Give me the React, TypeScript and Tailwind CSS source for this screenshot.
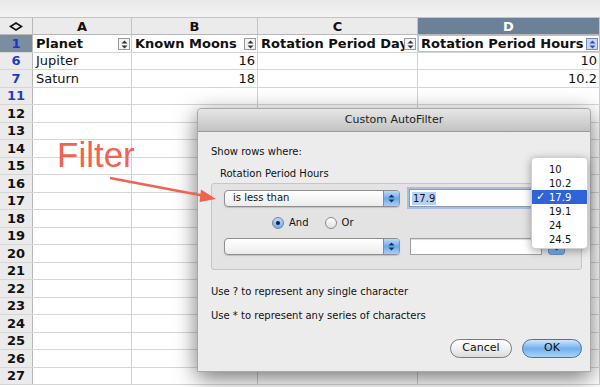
import React from 'react'

const cols = [
  { key: 'A', w: 'w-[99px]' },
  { key: 'B', w: 'w-[126px]' },
  { key: 'C', w: 'w-[160px]' },
  { key: 'D', w: 'flex-1' },
]

const rowNums = [1, 6, 7, 11, 12, 13, 14, 15, 16, 17, 18, 19, 20, 21, 22, 23, 24, 25, 26, 27]

const data: Record<number, string[]> = {
  1: ['Planet', 'Known Moons', 'Rotation Period Days', 'Rotation Period Hours'],
  6: ['Jupiter', '16', '', '10'],
  7: ['Saturn', '18', '', '10.2'],
}

const UpDown = ({ color = '#333' }: { color?: string }) => (
  <svg width="7" height="9" viewBox="0 0 7 9">
    <path d="M3.5 0.5 L6.5 3.5 L0.5 3.5 Z" fill={color} />
    <path d="M3.5 8.5 L6.5 5.5 L0.5 5.5 Z" fill={color} />
  </svg>
)

const FilterBtn = ({ active }: { active?: boolean }) => (
  <div
    className={`absolute right-[1px] top-[3px] w-[12px] h-[12px] flex items-center justify-center border ${
      active ? 'border-[#7a8fb0] bg-[#c8d6f0]' : 'border-[#9a9a9a] bg-[#f4f4f4]'
    }`}
  >
    <UpDown color={active ? '#2a4fc0' : '#333'} />
  </div>
)

const AquaSelect = ({ label }: { label: string }) => (
  <div className="w-[176px] h-[17px] flex items-center rounded-[4px] border border-[#8e8e8e] bg-gradient-to-b from-[#ffffff] to-[#ececec] shadow-[0_1px_1px_rgba(0,0,0,0.15)] overflow-hidden">
    <div className="flex-1 pl-[8px] text-[10px] leading-none text-[#111]">{label}</div>
    <div className="w-[16px] h-full flex items-center justify-center bg-gradient-to-b from-[#b9daf7] via-[#6aa9ec] to-[#a6d0f4] border-l border-[#6b8fc0]">
      <UpDown color="#1d2f55" />
    </div>
  </div>
)

const SmallBtn = () => (
  <div className="ml-[6px] w-[17px] h-[16px] rounded-[3px] border border-[#6b8fc0] bg-gradient-to-b from-[#b9daf7] to-[#6aa9ec] flex items-center justify-center">
    <UpDown color="#1d2f55" />
  </div>
)

export default function App() {
  return (
    <div className="relative w-[600px] h-[387px] overflow-hidden bg-white" style={{ fontFamily: '"DejaVu Sans", sans-serif' }}>
      {/* toolbar strip */}
      <div className="h-[18px] bg-gradient-to-b from-[#e9e9e9] to-[#f3f3f3] border-b border-[#c4c4c4]" />

      {/* column headers */}
      <div className="flex h-[17px] border-b border-[#b8b8b8] bg-[#ebebeb]">
        <div className="w-[33px] flex items-center justify-center border-r border-[#b8b8b8]">
          <svg width="14" height="9" viewBox="0 0 14 9">
            <path d="M1.5 4.5 L7 1 L12.5 4.5 L7 8 Z" fill="none" stroke="#111" strokeWidth="1.6" />
          </svg>
        </div>
        {cols.map((c) => (
          <div
            key={c.key}
            className={`${c.w} flex items-center justify-center border-r border-[#c4c4c4] font-bold text-[13px] leading-none ${
              c.key === 'D' ? 'bg-[#6c8198] text-white' : 'text-[#111]'
            }`}
          >
            {c.key}
          </div>
        ))}
      </div>

      {/* rows */}
      {rowNums.map((n) => {
        const vals = data[n] || ['', '', '', '']
        const header = n === 1
        const blue = n <= 11
        return (
          <div key={n} className="flex h-[17.5px] border-b border-[#d6d6d6]">
            <div
              className={`w-[33px] flex items-center justify-center border-r border-[#b8b8b8] font-bold text-[13px] leading-none ${
                header ? 'bg-[#7b8da0] text-[#1638c8]' : blue ? 'bg-[#ebebeb] text-[#1e3cc0]' : 'bg-[#ebebeb] text-[#111]'
              }`}
            >
              {n}
            </div>
            {cols.map((c, i) => (
              <div
                key={c.key}
                className={`${c.w} relative flex items-center overflow-hidden whitespace-nowrap border-r border-[#d0d0d0] text-[13px] leading-none text-[#111] ${
                  header ? 'font-bold px-[3px]' : i === 0 ? 'px-[3px]' : 'justify-end px-[2px]'
                } ${header && c.key === 'D' ? 'outline outline-1 -outline-offset-1 outline-[#a9c1ea]' : ''}`}
              >
                {vals[i]}
                {header && <FilterBtn active={c.key === 'D'} />}
              </div>
            ))}
          </div>
        )
      })}

      {/* dialog */}
      <div className="absolute left-[197px] top-[108px] w-[394px] h-[264px] bg-[#ececec] border border-[#a8a8a8] rounded-t-[4px] shadow-[0_6px_22px_rgba(0,0,0,0.55)] flex flex-col">
        <div className="h-[23px] shrink-0 flex items-center justify-center rounded-t-[4px] bg-gradient-to-b from-[#e6e6e6] to-[#c3c3c3] border-b border-[#9a9a9a] text-[11px] text-[#222]">
          Custom AutoFilter
        </div>
        <div className="pl-[13px] pr-[8px] pt-[15px] flex flex-col">
          <div className="text-[10px] leading-none text-[#111]">Show rows where:</div>
          <div className="ml-[9px] mt-[12px] text-[10px] leading-none text-[#111]">Rotation Period Hours</div>
          <div className="mt-[4px] h-[87px] rounded-[3px] border border-[#c6c6c6] bg-[#e3e3e3] pl-[12px] pt-[5px] flex flex-col">
            <div className="flex items-center">
              <AquaSelect label="is less than" />
              <div className="ml-[9px] w-[133px] h-[18px] flex items-center border border-[#8b9bb4] bg-white shadow-[0_0_0_2px_rgba(120,160,220,0.55)] pl-[2px]">
                <span className="bg-[#b5d2f4] text-[10px] leading-[13px] text-[#111] px-[1px]">17.9</span>
              </div>
              <SmallBtn />
            </div>
            <div className="flex items-center h-[17px] mt-[7px] ml-[48px] text-[10px] text-[#111]">
              <div className="w-[12px] h-[12px] rounded-full border border-[#6d86a8] bg-gradient-to-b from-[#bcd9f6] to-[#74aee8] flex items-center justify-center">
                <div className="w-[4px] h-[4px] rounded-full bg-[#102040]" />
              </div>
              <span className="ml-[5px]">And</span>
              <div className="ml-[16px] w-[12px] h-[12px] rounded-full border border-[#8a8a8a] bg-gradient-to-b from-[#ffffff] to-[#e0e0e0]" />
              <span className="ml-[5px]">Or</span>
            </div>
            <div className="flex items-center mt-[7px]">
              <AquaSelect label="" />
              <div className="ml-[10px] w-[132px] h-[17px] border border-[#a0a0a0] bg-white shadow-[inset_0_1px_1px_rgba(0,0,0,0.15)]" />
              <SmallBtn />
            </div>
          </div>
          <div className="mt-[17px] text-[10px] leading-none text-[#111]">Use ? to represent any single character</div>
          <div className="mt-[14px] text-[10px] leading-none text-[#111]">Use * to represent any series of characters</div>
          <div className="mt-[18px] flex justify-end gap-[10px]">
            <div className="w-[62px] h-[19px] rounded-full border border-[#7a7a7a] bg-gradient-to-b from-[#ffffff] via-[#f0f0f0] to-[#dcdcdc] flex items-center justify-center text-[11px] text-[#111]">
              Cancel
            </div>
            <div className="w-[60px] h-[19px] rounded-full border border-[#4a72a8] bg-gradient-to-b from-[#cfe6fb] via-[#72b0ee] to-[#a8d4f8] flex items-center justify-center text-[11px] text-[#111]">
              OK
            </div>
          </div>
        </div>
      </div>

      {/* popup list */}
      <div className="absolute left-[531px] top-[157px] w-[57px] h-[92px] rounded-[4px] bg-white shadow-[0_2px_8px_rgba(0,0,0,0.35)] border border-[#d0d0d0] pt-[4px] text-[10px] text-[#111]">
        {['10', '10.2', '17.9', '19.1', '24', '24.5'].map((v) => (
          <div
            key={v}
            className={`h-[14px] flex items-center ${v === '17.9' ? 'bg-[#2f63d9] text-white' : ''}`}
          >
            <span className="w-[17px] text-center text-[11px]">{v === '17.9' ? '✓' : ''}</span>
            <span>{v}</span>
          </div>
        ))}
      </div>

      {/* annotation */}
      <div className="absolute left-[57px] top-[137px] text-[35px] leading-none text-[#ef6350]" style={{ fontFamily: '"Liberation Sans", sans-serif' }}>
        Filter
      </div>
      <svg className="absolute left-0 top-0 pointer-events-none" width="600" height="387" viewBox="0 0 600 387">
        <line x1="110" y1="178" x2="205" y2="196" stroke="#ef6350" strokeWidth="2.5" />
        <path d="M216 199 L201 189.5 L199.5 202 Z" fill="#ef6350" />
      </svg>
    </div>
  )
}
